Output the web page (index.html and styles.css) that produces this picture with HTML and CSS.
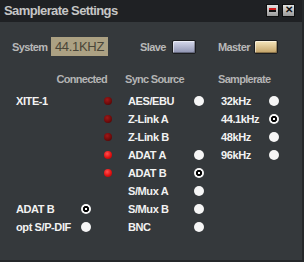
FILE: index.html
```html
<!DOCTYPE html>
<html>
<head>
  <meta charset="utf-8">
  <title>Samplerate Settings</title>
  <link rel="stylesheet" href="styles.css">
</head>
<body>
  <div class="window">
    <div class="titlebar">
      <div class="title">Samplerate Settings</div>
      <div class="tbtn min"><span></span></div>
      <div class="tbtn close">&#x2715;</div>
    </div>

    <div class="content">
      <div class="clock">
        <span class="lbl sys">System</span>
        <div class="lcd">44.1KHZ</div>
        <span class="lbl slave-lbl">Slave</span>
        <div class="pill slave"></div>
        <span class="lbl master-lbl">Master</span>
        <div class="pill master"></div>
      </div>

      <div class="grid head">
        <span class="h-conn">Connected</span>
        <span class="h-sync">Sync Source</span>
        <span class="h-rate">Samplerate</span>
      </div>

      <div class="grid row">
        <span class="name">XITE-1</span><span></span>
        <span class="led dim"></span>
        <span class="name">AES/EBU</span><span class="radio"></span>
        <span class="name">32kHz</span><span class="radio"></span>
      </div>
      <div class="grid row">
        <span></span><span></span>
        <span class="led dim"></span>
        <span class="name">Z-Link A</span><span></span>
        <span class="name">44.1kHz</span><span class="radio on"></span>
      </div>
      <div class="grid row">
        <span></span><span></span>
        <span class="led dim"></span>
        <span class="name">Z-Link B</span><span></span>
        <span class="name">48kHz</span><span class="radio"></span>
      </div>
      <div class="grid row">
        <span></span><span></span>
        <span class="led lit"></span>
        <span class="name">ADAT A</span><span class="radio"></span>
        <span class="name">96kHz</span><span class="radio"></span>
      </div>
      <div class="grid row">
        <span></span><span></span>
        <span class="led lit"></span>
        <span class="name">ADAT B</span><span class="radio on"></span>
        <span></span><span></span>
      </div>
      <div class="grid row">
        <span></span><span></span>
        <span></span>
        <span class="name">S/Mux A</span><span class="radio"></span>
        <span></span><span></span>
      </div>
      <div class="grid row">
        <span class="name">ADAT B</span><span class="radio on"></span>
        <span></span>
        <span class="name">S/Mux B</span><span class="radio"></span>
        <span></span><span></span>
      </div>
      <div class="grid row">
        <span class="name">opt S/P-DIF</span><span class="radio"></span>
        <span></span>
        <span class="name">BNC</span><span class="radio"></span>
        <span></span><span></span>
      </div>
    </div>
  </div>
</body>
</html>
```

FILE: styles.css
```css
body{
    margin: 0;
    background-color: #35393c;
    font-family: "Liberation Sans", Arial, sans-serif;
}

.window{
    width: 304px;
    height: 262px;
    display: flex;
    flex-direction: column;
    box-sizing: border-box;
    border-right: 2px solid #25282a;
    border-bottom: 2px solid #25282a;
}

.titlebar{
    height: 22px;
    background-color: #1f2124;
    display: flex;
    align-items: center;
    padding: 0 7px 0 4px;
}

.title{
    flex: 1;
    color: #c6c6c6;
    font-weight: bold;
    font-size: 13px;
    letter-spacing: -0.6px;
    margin-top: -1px;
}

.tbtn{
    width: 11px;
    height: 11px;
    margin-left: 3px;
    margin-top: -2px;
    border: 1px solid #0e0f10;
    background: linear-gradient(#e2e2e2, #9a9a9a);
    display: flex;
    align-items: center;
    justify-content: center;
    color: #111;
    font-size: 10px;
    font-weight: bold;
    line-height: 1;
}

.min span{
    width: 7px;
    height: 2px;
    background-color: #d01818;
    border-bottom: 2px solid #111;
}

.content{
    flex: 1;
    padding-top: 15px;
}

.clock{
    display: flex;
    align-items: center;
    height: 19px;
    padding-left: 12px;
}

.lbl{
    color: #b8b8b8;
    font-weight: bold;
    font-size: 11px;
    letter-spacing: -0.6px;
    white-space: nowrap;
}

.sys{
    width: 39px;
}

.lcd{
    width: 57px;
    height: 19px;
    background-color: #aca183;
    color: #4a4638;
    font-size: 13px;
    line-height: 19px;
    text-align: center;
    letter-spacing: -0.3px;
}

.slave-lbl{
    margin-left: 32px;
    width: 32px;
}

.master-lbl{
    margin-left: 22px;
    width: 36px;
}

.pill{
    width: 22px;
    height: 12px;
    border: 1px solid #1c1d1f;
    border-radius: 2px;
    box-shadow: inset 1px 1px 0 rgba(255,255,255,0.5), inset -1px -1px 0 rgba(0,0,0,0.3);
}

.slave{
    background: linear-gradient(#d6d9ec, #8d92b0);
}

.master{
    background: linear-gradient(#f6e6bc, #c3a266);
}

.grid{
    display: grid;
    grid-template-columns: 65px 23px 24px 66px 27px 48px 10px;
    padding-left: 16px;
    align-items: center;
}

.head{
    margin-top: 17px;
    height: 12px;
    margin-bottom: 7px;
    color: #b4b4b4;
    font-weight: bold;
    font-size: 11px;
    letter-spacing: -0.7px;
}

.h-conn{
    grid-column: 1 / 4;
    justify-self: end;
    margin-right: 21px;
}

.h-sync{
    grid-column: 4;
    margin-left: -3px;
    white-space: nowrap;
}

.h-rate{
    grid-column: 6 / 8;
    margin-left: -3px;
}

.row{
    height: 18px;
}

.name{
    color: #f2f2f2;
    font-weight: bold;
    font-size: 11px;
    letter-spacing: -0.4px;
    white-space: nowrap;
}

.radio{
    width: 10px;
    height: 10px;
    border-radius: 50%;
    background-color: #f6f6f6;
}

.radio.on{
    background: radial-gradient(circle, #fff 0 0.8px, #000 1.4px 2.8px, #f6f6f6 3.4px);
}

.led{
    width: 8px;
    height: 8px;
    border-radius: 50%;
}

.led.dim{
    background: radial-gradient(circle at 40% 35%, #a01818, #6a0a0a 60%, #3c0606);
}

.led.lit{
    background: radial-gradient(circle at 40% 35%, #ff5050, #e01010 55%, #8c0606);
}
```
